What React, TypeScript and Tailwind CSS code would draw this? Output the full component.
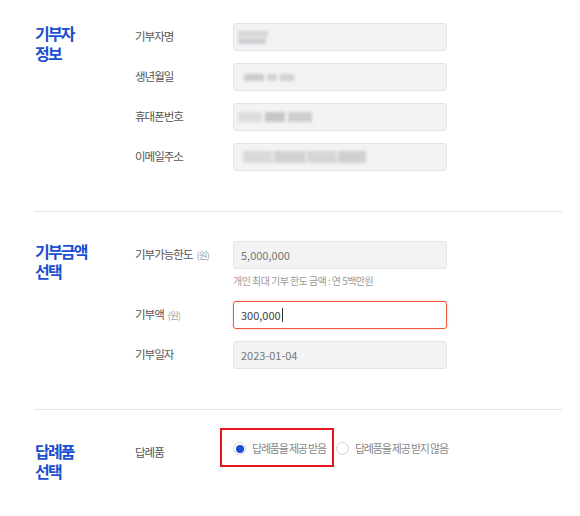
import React from "react";

const Blob = ({ w, h = 12, c = "#cfcfcf", className = "" }: { w: number; h?: number; c?: string; className?: string }) => (
  <span
    className={`inline-block blur-[1.5px] ${className}`}
    style={{ width: w, height: h, background: c }}
  />
);

const GrayInput = ({ children }: { children?: React.ReactNode }) => (
  <div className="w-[214px] h-[28px] rounded-[3px] border border-[#e3e3e3] bg-[#f3f3f3] flex items-center px-[7px] text-[11px] text-[#777] overflow-hidden">
    {children}
  </div>
);

const Label = ({ children, unit }: { children: React.ReactNode; unit?: boolean }) => (
  <div className="w-[98px] text-[11.5px] tracking-[-1px] text-[#555]">
    {children}
    {unit && <span className="ml-[4px] text-[9.5px] text-[#a0a0a0]">(원)</span>}
  </div>
);

const Title = ({ a, b }: { a: string; b: string }) => (
  <div className="w-[100px] text-[16px] leading-[20px] font-bold tracking-[-1.8px] text-[#1a4fd0]">
    {a}
    <br />
    {b}
  </div>
);

export default function App() {
  return (
    <div className="w-[580px] h-[516px] bg-white font-['Noto_Sans_CJK_KR','Noto_Sans',sans-serif]">
      <div className="ml-[34px] w-[528px]">
        {/* Section 1 */}
        <div className="flex pt-[23px] pb-[40px] border-b border-[#e6e6e6] pl-[1px]">
          <Title a="기부자" b="정보" />
          <div className="flex flex-col gap-[12px]">
            <div className="flex items-center">
              <Label>기부자명</Label>
              <GrayInput>
                <div className="flex flex-col gap-[1px] -ml-[3px]">
                  <Blob w={30} h={6} c="#d6d6d6" />
                  <Blob w={28} h={6} c="#cdd0d4" />
                </div>
              </GrayInput>
            </div>
            <div className="flex items-center">
              <Label>생년월일</Label>
              <GrayInput>
                <div className="flex gap-[3px] ml-[3px]">
                  <Blob w={20} h={7} c="#cbcbcb" />
                  <Blob w={10} h={7} c="#d3d3d3" />
                  <Blob w={14} h={7} c="#cfd1d4" />
                </div>
              </GrayInput>
            </div>
            <div className="flex items-center">
              <Label>휴대폰번호</Label>
              <GrayInput>
                <div className="flex gap-[3px] -ml-[3px]">
                  <Blob w={24} h={10} c="#dcdcdc" />
                  <Blob w={20} h={10} c="#c6c6c6" />
                  <Blob w={24} h={10} c="#cfcfcf" />
                </div>
              </GrayInput>
            </div>
            <div className="flex items-center">
              <Label>이메일주소</Label>
              <GrayInput>
                <div className="flex gap-[1px] ml-[2px]">
                  <Blob w={30} h={12} c="#dadada" />
                  <Blob w={32} h={12} c="#d2d2d2" />
                  <Blob w={30} h={12} c="#d6d6d6" />
                  <Blob w={28} h={12} c="#d0d0d0" />
                </div>
              </GrayInput>
            </div>
          </div>
        </div>

        {/* Section 2 */}
        <div className="flex pt-[29px] pb-[40px] border-b border-[#e6e6e6] pl-[1px]">
          <Title a="기부금액" b="선택" />
          <div className="flex flex-col">
            <div className="flex items-center">
              <Label unit>기부가능한도</Label>
              <GrayInput>5,000,000</GrayInput>
            </div>
            <div className="ml-[98px] mt-[4px] h-[16px] leading-[16px] text-[10px] tracking-[-0.55px] text-[#9a9a9a]">
              개인 최대 기부 한도 금액 : 연 5백만원
            </div>
            <div className="flex items-center mt-[12px]">
              <Label unit>기부액</Label>
              <div className="w-[214px] h-[28px] rounded-[3px] border-[1.5px] border-[#f25a3d] bg-white shadow-[0_0_2px_rgba(242,90,61,0.4)] flex items-center px-[7px] text-[11px] text-[#444]">
                300,000
                <span className="ml-[1px] w-[1px] h-[14px] bg-[#333]" />
              </div>
            </div>
            <div className="flex items-center mt-[12px]">
              <Label>기부일자</Label>
              <GrayInput>2023-01-04</GrayInput>
            </div>
          </div>
        </div>

        {/* Section 3 */}
        <div className="flex pt-[29px] pl-[1px]">
          <div className="pt-[2px]">
            <Title a="답례품" b="선택" />
          </div>
          <div className="flex items-start">
            <div className="w-[85px] h-[28px] flex items-center text-[11.5px] tracking-[-1px] text-[#555]">답례품</div>
            <div className="-mt-[11px] h-[39px] border-2 border-[#e8141c] flex items-center pl-[11px] pr-[6px] pt-[2px]">
              <span className="w-[13px] h-[13px] rounded-full border border-[#d4d4d4] bg-white flex items-center justify-center">
                <span className="w-[8px] h-[8px] rounded-full bg-[#1a4fd6]" />
              </span>
              <span className="ml-[6px] text-[11px] tracking-[-1.2px] text-[#888]">답례품을 제공 받음</span>
            </div>
            <div className="-mt-[11px] h-[39px] flex items-center pl-[2px] pt-[2px]">
              <span className="w-[13px] h-[13px] rounded-full border border-[#d4d4d4] bg-white" />
              <span className="ml-[6px] text-[11px] tracking-[-1.2px] text-[#888]">답례품을 제공 받지 않음</span>
            </div>
          </div>
        </div>
      </div>
    </div>
  );
}
